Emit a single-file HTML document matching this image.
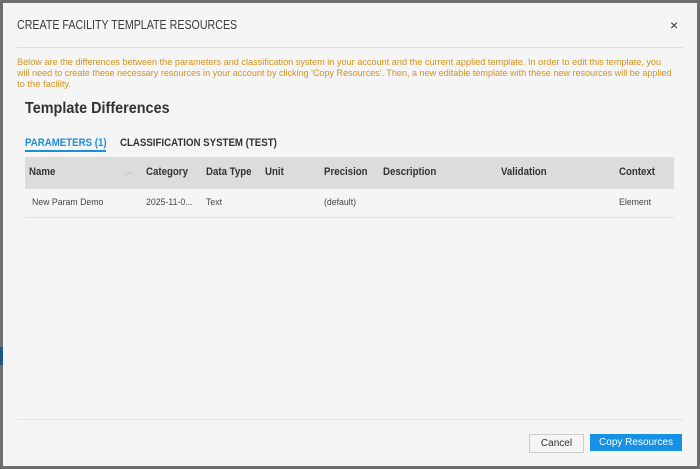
<!DOCTYPE html>
<html><head><style>
body{margin:0;width:700px;height:469px;background:#6f6f6f;position:relative;overflow:hidden;font-family:"Liberation Sans",sans-serif}
.dlg{position:absolute;left:3px;top:3px;width:694px;height:463px;background:#f5f5f5}
.a{position:absolute;white-space:nowrap}
.th{position:absolute;top:166px;font-size:11px;color:#333;font-weight:bold;transform:scaleX(.88);transform-origin:left}
.td{position:absolute;top:197px;font-size:9.5px;color:#444;transform:scaleX(.92);transform-origin:left}
.o{position:absolute;left:17px;font-size:9.4px;color:#d4921c;white-space:nowrap;transform-origin:left}
</style></head><body>
<div class="a" style="left:0;top:347px;width:3px;height:18px;background:#1d5a8a"></div>
<div class="dlg"></div>
<div class="a" style="left:17px;top:17px;font-size:13px;color:#3c3c3c;transform:scaleX(.82);transform-origin:left">CREATE FACILITY TEMPLATE RESOURCES</div>
<div class="a" style="left:670px;top:17px;font-size:14px;color:#333">×</div>
<div class="a" style="left:17px;top:47px;width:666px;height:1px;background:#e0e0e0"></div>
<div class="o" style="top:56px;transform:scaleX(.975)">Below are the differences between the parameters and classification system in your account and the current applied template. In order to edit this template, you</div>
<div class="o" style="top:67px;transform:scaleX(.965)">will need to create these necessary resources in your account by clicking 'Copy Resources'. Then, a new editable template with these new resources will be applied</div>
<div class="o" style="top:78px">to the facility.</div>
<div class="a" style="left:25px;top:100px;font-size:16px;font-weight:bold;color:#333;transform:scaleX(.9);transform-origin:left">Template Differences</div>
<div class="a" style="left:25px;top:137px;font-size:11px;color:#1d8fd6;font-weight:bold;transform:scaleX(.88);transform-origin:left">PARAMETERS (1)</div>
<div class="a" style="left:25px;top:150px;width:81px;height:2px;background:#1d8fd6"></div>
<div class="a" style="left:120px;top:137px;font-size:11px;color:#333;font-weight:bold;transform:scaleX(.88);transform-origin:left">CLASSIFICATION SYSTEM (TEST)</div>
<div class="a" style="left:25px;top:157px;width:649px;height:32px;background:#dcdcdc"></div>
<div class="th" style="left:29px">Name</div>
<div class="a" style="left:125px;top:163px;font-size:10px;color:#bbb">︿</div>
<div class="th" style="left:146px">Category</div>
<div class="th" style="left:206px">Data Type</div>
<div class="th" style="left:265px">Unit</div>
<div class="th" style="left:324px">Precision</div>
<div class="th" style="left:383px">Description</div>
<div class="th" style="left:501px">Validation</div>
<div class="th" style="left:619px">Context</div>
<div class="td" style="left:32px">New Param Demo</div>
<div class="td" style="left:146px">2025-11-0...</div>
<div class="td" style="left:206px">Text</div>
<div class="td" style="left:324px">(default)</div>
<div class="td" style="left:619px">Element</div>
<div class="a" style="left:25px;top:217px;width:649px;height:1px;background:#e0e0e0"></div>
<div class="a" style="left:17px;top:419px;width:666px;height:1px;background:#e4e4e4"></div>
<div class="a" style="left:529px;top:434px;width:53px;height:17px;border:1px solid #ccc;background:#f5f5f5;font-size:10px;color:#333;text-align:center;line-height:18px">Cancel</div>
<div class="a" style="left:590px;top:434px;width:92px;height:17px;background:#1592e6;font-size:10px;color:#fff;text-align:center;line-height:18px">Copy Resources</div>
</body></html>
